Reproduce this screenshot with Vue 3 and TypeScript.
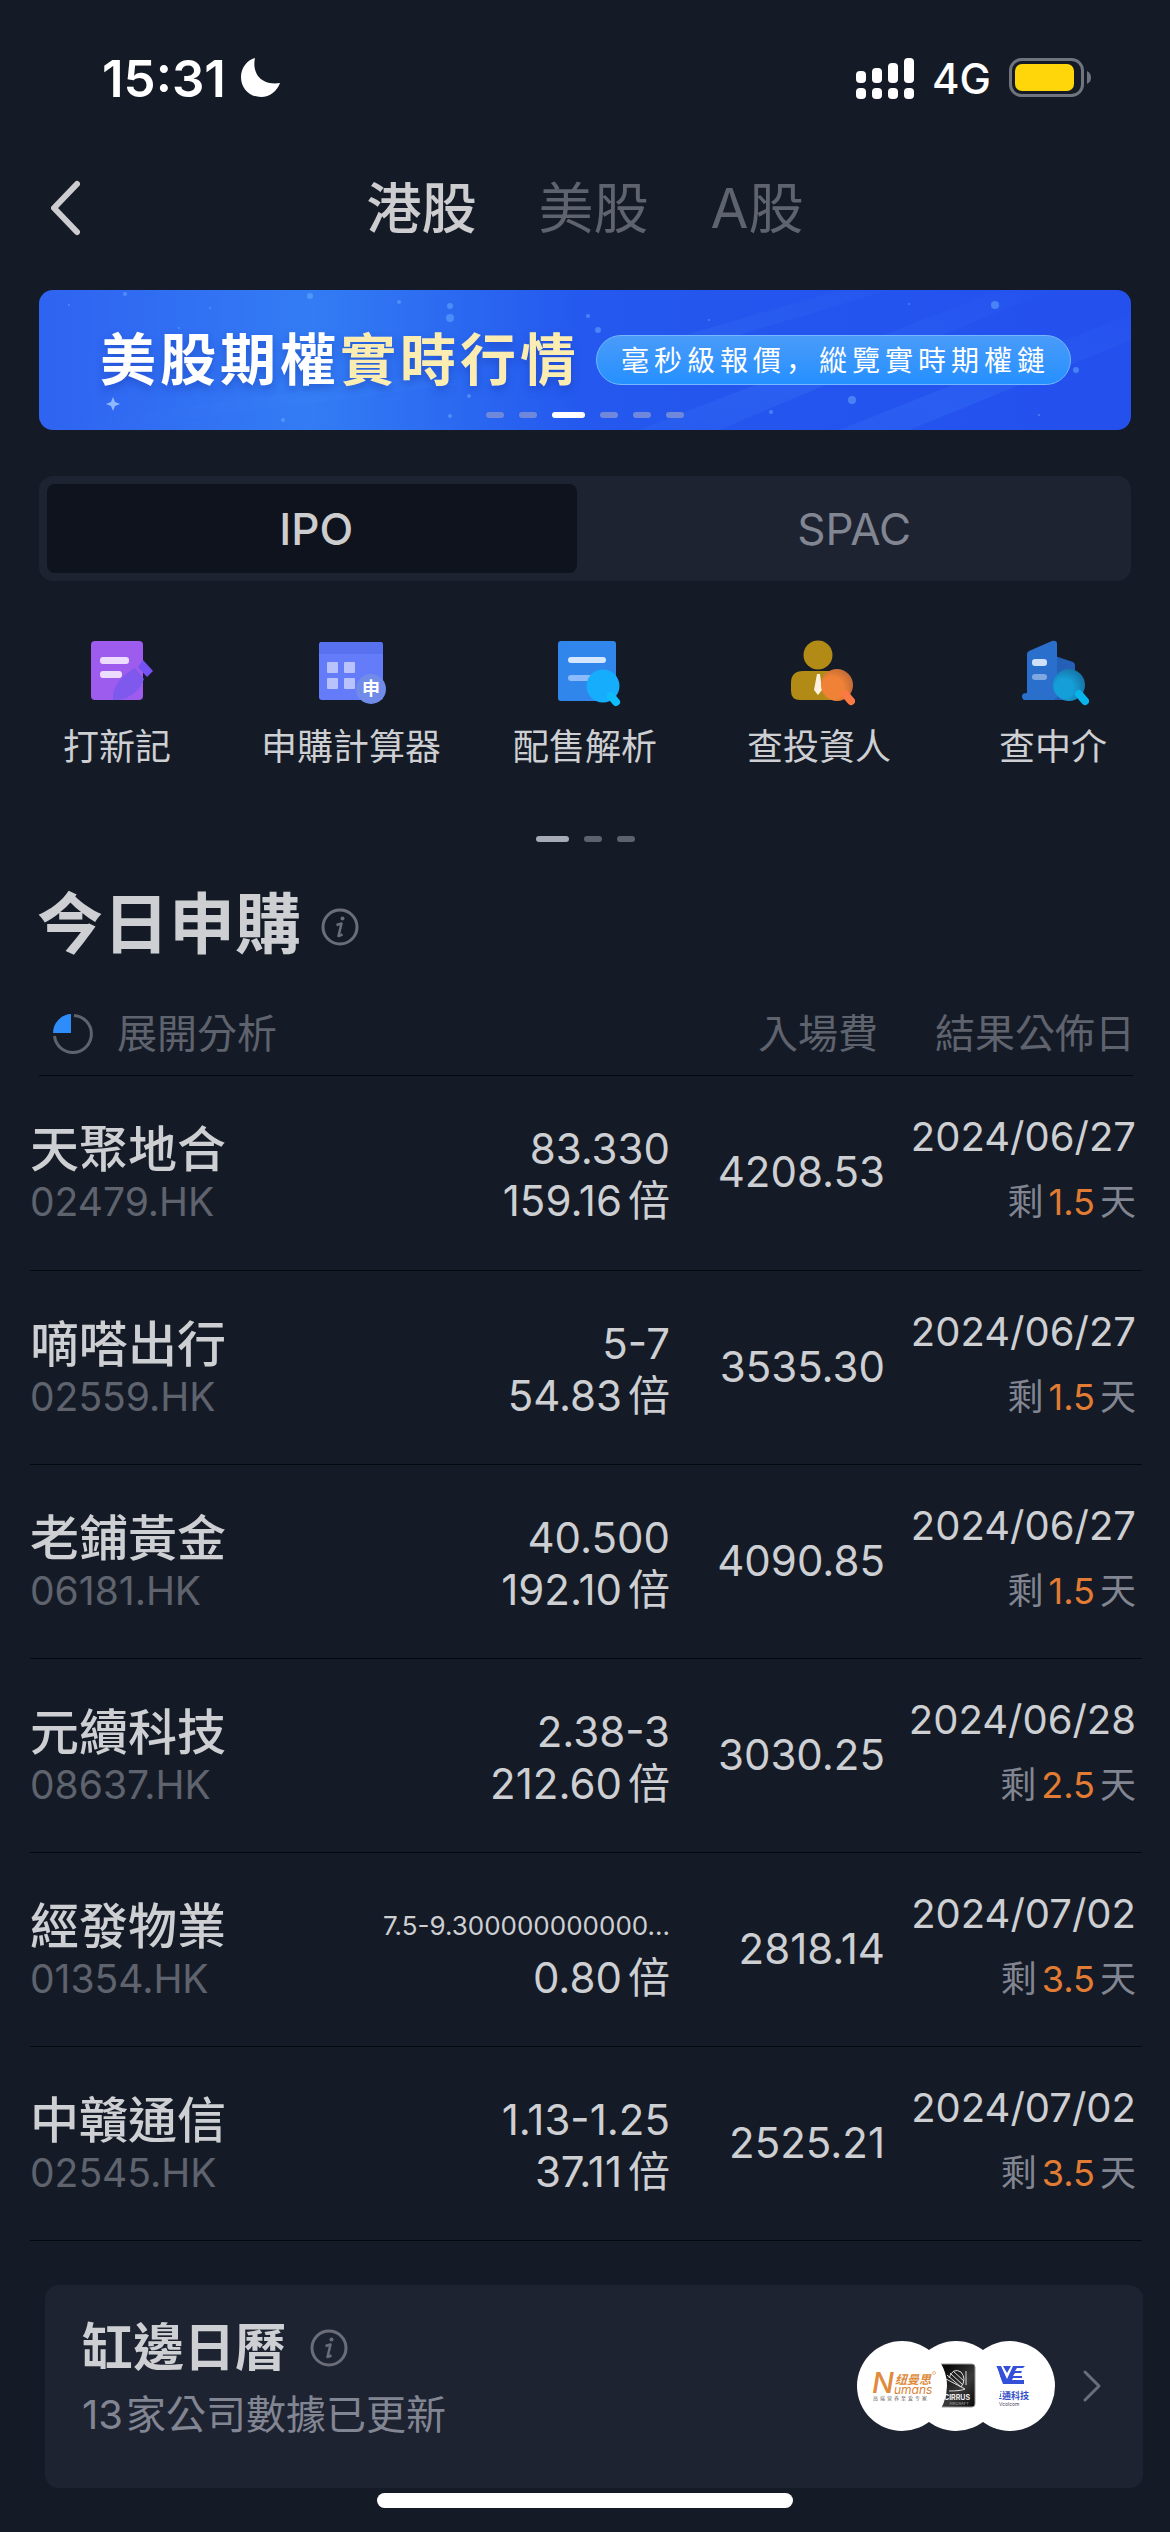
<script setup lang="ts">
interface Offering {
  name: string
  code: string
  price: string
  small?: boolean
  multiple: string
  fee: string
  date: string
  days: string
}

const markets: string[] = ['港股', '美股', 'A股']
const tools: string[] = ['打新記', '申購計算器', '配售解析', '查投資人', '查中介']

const offerings: Offering[] = [
  { name: '天聚地合', code: '02479.HK', price: '83.330', multiple: '159.16', fee: '4208.53', date: '2024/06/27', days: '1.5' },
  { name: '嘀嗒出行', code: '02559.HK', price: '5-7', multiple: '54.83', fee: '3535.30', date: '2024/06/27', days: '1.5' },
  { name: '老鋪黃金', code: '06181.HK', price: '40.500', multiple: '192.10', fee: '4090.85', date: '2024/06/27', days: '1.5' },
  { name: '元續科技', code: '08637.HK', price: '2.38-3', multiple: '212.60', fee: '3030.25', date: '2024/06/28', days: '2.5' },
  { name: '經發物業', code: '01354.HK', price: '7.5-9.300000000000...', small: true, multiple: '0.80', fee: '2818.14', date: '2024/07/02', days: '3.5' },
  { name: '中贛通信', code: '02545.HK', price: '1.13-1.25', multiple: '37.11', fee: '2525.21', date: '2024/07/02', days: '3.5' },
]
</script>

<template>
  <div class="app">
    <header class="status">
      <div class="clock">
        <span>15:31</span>
        <svg width="42" height="42" viewBox="0 0 42 42"><path d="M15 1C12 14 19 29 40 26C37 34 30 40 21 40C10 40 1 32 1 20C1 11 7 3 15 1Z" fill="#fff" /></svg>
      </div>
      <div class="signals">
        <svg width="58" height="42" viewBox="0 0 58 42" fill="#fff">
          <rect x="0" y="14" width="10" height="12" rx="4" /><rect x="16" y="11" width="10" height="15" rx="4" /><rect x="32" y="6" width="10" height="20" rx="4" /><rect x="48" y="1" width="10" height="25" rx="4" />
          <rect x="0" y="31" width="10" height="11" rx="4" /><rect x="16" y="31" width="10" height="11" rx="4" /><rect x="32" y="31" width="10" height="11" rx="4" /><rect x="48" y="31" width="10" height="11" rx="4" />
        </svg>
        <span class="network">4G</span>
        <svg width="84" height="40" viewBox="0 0 84 40">
          <rect x="1.5" y="1.5" width="72" height="36" rx="11" fill="none" stroke="#70747d" stroke-width="3" />
          <rect x="6" y="6" width="59" height="27" rx="7" fill="#ffd60a" />
          <path d="M78 13Q82 15 82 19.500Q82 24 78 26Z" fill="#70747d" />
        </svg>
      </div>
    </header>

    <nav class="nav">
      <button class="back" aria-label="返回">
        <svg width="34" height="56" viewBox="0 0 34 56"><path d="M29 4L6 28L29 52" fill="none" stroke="#cdcdcf" stroke-width="6" stroke-linecap="round" stroke-linejoin="round" /></svg>
      </button>
      <div class="markets">
        <button v-for="(m, i) in markets" :key="m" :class="['market', { on: i === 0 }]">{{ m }}</button>
      </div>
    </nav>

    <a class="banner" href="#">
      <svg class="sky" viewBox="0 0 1092 140" preserveAspectRatio="none" aria-hidden="true">
        <defs>
          <linearGradient id="sky" x1="0" y1="0" x2="1" y2="0">
            <stop offset="0" stop-color="#2f63f1" /><stop offset="0.25" stop-color="#337cf4" /><stop offset="0.5" stop-color="#2458ee" /><stop offset="1" stop-color="#2450ee" />
          </linearGradient>
          <linearGradient id="ray" x1="0" y1="1" x2="1" y2="0">
            <stop offset="0" stop-color="#4a95ff" stop-opacity="0" /><stop offset="0.5" stop-color="#4a95ff" stop-opacity="0.16" /><stop offset="1" stop-color="#4a95ff" stop-opacity="0" />
          </linearGradient>
        </defs>
        <rect width="1092" height="140" fill="url(#sky)" />
        <path d="M40 132L360 88L420 94L60 140Z M560 70L800 0H850L570 84Z M600 140L960 0H1010L680 140Z M800 140L1092 24V50L870 140Z" fill="url(#ray)" />
        <g fill="#6cb2ff" opacity="0.5">
          <circle cx="271" cy="6" r="3" /><circle cx="411" cy="16" r="3" /><circle cx="411" cy="28" r="4" /><circle cx="360" cy="12" r="2" /><circle cx="559" cy="40" r="3" /><circle cx="549" cy="26" r="2" /><circle cx="956" cy="15" r="4" /><circle cx="813" cy="110" r="4" /><circle cx="732" cy="122" r="2" /><circle cx="86" cy="4" r="2" /><circle cx="1037" cy="80" r="3" /><circle cx="244" cy="130" r="2" /><circle cx="411" cy="126" r="2" /><circle cx="30" cy="15" r="1" /><circle cx="430" cy="106" r="2" /><circle cx="870" cy="14" r="1" /><circle cx="1000" cy="125" r="1" /><circle cx="171" cy="18" r="1" /><circle cx="140" cy="38" r="1" /><circle cx="670" cy="30" r="1" />
        </g>
        <path d="M74 107L76 112L81 114L76 116L74 121L72 116L67 114L72 112Z" fill="#8fb8ff" />
      </svg>
      <span class="headline">美股期權<em>實時行情</em></span>
      <span class="pill">毫秒級報價<span class="comma">，</span>縱覽實時期權鏈</span>
      <span class="dots slide-dots"><i /><i /><i class="on" /><i /><i /><i /></span>
    </a>

    <div class="segment">
      <button class="seg on">IPO</button>
      <button class="seg">SPAC</button>
    </div>

    <div class="tools">
      <a v-for="(t, i) in tools" :key="t" class="tool" href="#">
        <svg v-if="i === 0" width="72" height="72" viewBox="0 0 72 72">
          <rect x="10" y="5" width="52" height="59" rx="4" fill="#9d5ced" />
          <rect x="19" y="21" width="29" height="7" rx="3" fill="#ecdcff" /><rect x="19" y="35" width="22" height="7" rx="3" fill="#ecdcff" />
          <path d="M32 64C31 52 38 41 54 32L63 43C60 53 50 62 38 64Z" fill="#7857ee" opacity="0.8" /><path d="M62 24L72 35L66 41L57 31Z" fill="#7552f4" />
        </svg>
        <svg v-else-if="i === 1" width="72" height="72" viewBox="0 0 72 72">
          <rect x="4" y="6" width="64" height="58" rx="3" fill="#647bfa" /><path d="M7 6H65Q68 6 68 9V18H4V9Q4 6 7 6Z" fill="#5872ef" />
          <g fill="#b8c2fc"><rect x="12" y="26" width="11" height="11" rx="1" /><rect x="29" y="26" width="11" height="11" rx="1" /><rect x="12" y="42" width="11" height="11" rx="1" /><rect x="29" y="42" width="11" height="11" rx="1" /></g>
          <circle cx="56" cy="53" r="15" fill="#718be9" /><text x="56" y="59" text-anchor="middle" font-size="18" font-weight="700" fill="#fff">申</text>
        </svg>
        <svg v-else-if="i === 2" width="72" height="72" viewBox="0 0 72 72">
          <rect x="9" y="5" width="58" height="60" rx="3" fill="#3086eb" />
          <rect x="19" y="21" width="38" height="6" rx="3" fill="#d5e7ff" /><rect x="19" y="39" width="28" height="6" rx="3" fill="#8dbafa" />
          <circle cx="54" cy="50" r="16.500" fill="#16adfc" /><path d="M62 60L67 66" stroke="#10bdfc" stroke-width="8" stroke-linecap="round" />
        </svg>
        <svg v-else-if="i === 3" width="72" height="72" viewBox="0 0 72 72">
          <defs><radialGradient id="lensWarm" cx="0.35" cy="0.6" r="0.7"><stop offset="0.5" stop-color="#ef8236" /><stop offset="1" stop-color="#bd6937" /></radialGradient></defs>
          <circle cx="35" cy="19" r="14.500" fill="#b18b15" /><path d="M20 35H52V64H17Q8 64 8 55V47Q8 35 20 35Z" fill="#b18b15" />
          <path d="M34 38H37L39 54L35 59L31 54Z" fill="#fff1df" />
          <circle cx="54" cy="49" r="16" fill="url(#lensWarm)" /><path d="M62 58L68 65" stroke="#fb7943" stroke-width="8" stroke-linecap="round" />
        </svg>
        <svg v-else width="72" height="72" viewBox="0 0 72 72">
          <defs><radialGradient id="lensCool" cx="0.35" cy="0.6" r="0.7"><stop offset="0.4" stop-color="#159fd8" /><stop offset="1" stop-color="#176fa1" /></radialGradient></defs>
          <path d="M38 20L56 26Q58 27 58 29V62H38Z" fill="#2560b8" /><path d="M10 18Q10 16 12 15L35 5Q40 4 40 8V64H8Q5 64 5 60Q5 57 10 57Z" fill="#2a6fcb" /><path d="M38 62H56V64H38Z" fill="#2560b8" />
          <rect x="15" y="23" width="15" height="7" rx="3" fill="#cfe0f8" /><rect x="15" y="38" width="15" height="6" rx="3" fill="#7fa8e0" />
          <circle cx="52" cy="49" r="16" fill="url(#lensCool)" /><path d="M62 58L68 65" stroke="#08b5ea" stroke-width="8" stroke-linecap="round" />
        </svg>
        <span>{{ t }}</span>
      </a>
    </div>
    <div class="dots tool-dots"><i class="on" /><i /><i /></div>

    <h1 class="title">
      今日申購
      <svg class="info" width="38" height="38" viewBox="0 0 38 38"><circle cx="19" cy="19" r="17" fill="none" stroke="#6b6e79" stroke-width="3" /><circle cx="21.500" cy="10.500" r="2" fill="#6b6e79" /><path d="M15.500 17L20.500 15.500L17.500 28L21.500 26.500" fill="none" stroke="#6b6e79" stroke-width="2.500" stroke-linejoin="round" /></svg>
    </h1>

    <table class="list">
      <colgroup><col class="c1" /><col class="c2" /><col class="c3" /><col /></colgroup>
      <thead>
        <tr>
          <th scope="col">
            <button class="expand">
              <svg width="42" height="42" viewBox="0 0 42 42"><path d="M22 2.500A18.500 18.500 0 1 1 2.500 23" fill="none" stroke="#5f636e" stroke-width="3" /><path d="M19 1V20H1A19 19 0 0 1 19 1Z" fill="#2f8dfb" /></svg>
              展開分析
            </button>
          </th>
          <th scope="col"></th>
          <th scope="col">入場費</th>
          <th scope="col">結果公佈日</th>
        </tr>
      </thead>
      <tbody>
        <tr v-for="o in offerings" :key="o.code">
          <td><div class="name">{{ o.name }}</div><div class="code">{{ o.code }}</div></td>
          <td><div :class="['num', { tiny: o.small }]">{{ o.price }}</div><div class="num times">{{ o.multiple }}<b>倍</b></div></td>
          <td><div class="num fee">{{ o.fee }}</div></td>
          <td><div class="date">{{ o.date }}</div><div class="left">剩<b>{{ o.days }}</b>天</div></td>
        </tr>
      </tbody>
    </table>

    <a class="card" href="#">
      <div class="card-text">
        <h2>
          缸邊日曆
          <svg class="info" width="38" height="38" viewBox="0 0 38 38"><circle cx="19" cy="19" r="17" fill="none" stroke="#6b6e79" stroke-width="3" /><circle cx="21.500" cy="10.500" r="2" fill="#6b6e79" /><path d="M15.500 17L20.500 15.500L17.500 28L21.500 26.500" fill="none" stroke="#6b6e79" stroke-width="2.500" stroke-linejoin="round" /></svg>
        </h2>
        <p><span>13</span>家公司數據已更新</p>
      </div>
      <div class="logos">
        <svg width="90" height="90" viewBox="0 0 90 90">
          <circle cx="45" cy="45" r="45" fill="#fff" />
          <text x="15" y="52" font-size="29" font-weight="500" font-style="italic" fill="#e08a3c">N</text>
          <text x="38" y="43" font-size="12" font-weight="700" font-style="italic" fill="#e08a3c">纽曼思</text>
          <text x="37" y="53" font-size="12" font-style="italic" fill="#d98234">umans</text>
          <circle cx="77" cy="32" r="1.500" fill="none" stroke="#e08a3c" stroke-width="0.600" />
          <text class="motto" x="16" y="59" font-size="5" fill="#666">高端营养至爱专家</text>
        </svg>
        <svg width="90" height="90" viewBox="0 0 90 90">
          <defs><linearGradient id="metal" x1="0" y1="0" x2="1" y2="1"><stop offset="0.200" stop-color="#090909" /><stop offset="0.600" stop-color="#3a3a3a" /><stop offset="1" stop-color="#070707" /></linearGradient></defs>
          <circle cx="45" cy="45" r="45" fill="#fff" />
          <rect x="24" y="23" width="40" height="43" rx="3" fill="url(#metal)" stroke="#999" />
          <path d="M38 37Q42 26 50 31Q56 38 50 46L36 34M39 32L52 44M42 30L53 40M38 50Q50 50 54 48L35 38M55 30V44" fill="none" stroke="#ddd" stroke-width="1" />
          <text x="46" y="59" text-anchor="middle" font-size="7" font-weight="700" fill="#eee">CIRRUS</text>
          <text x="48" y="64" text-anchor="middle" font-size="4" fill="#aaa">AIRCRAFT</text>
        </svg>
        <svg width="90" height="90" viewBox="0 0 90 90">
          <circle cx="45" cy="45" r="45" fill="#fff" />
          <path d="M31 25H36L42 38L48 25H60L58 27H52L50 30H57L56 32H50L48 35H57V37H48L47 39H59V43H38Z M38 25H46L42 32Z" fill="#3450d8" />
          <text x="28" y="58" font-size="9" font-weight="700" fill="#3450c8">卓通科技</text>
          <text x="34" y="65" font-size="5" fill="#445">Vcolcom</text>
        </svg>
      </div>
      <svg class="go" width="20" height="34" viewBox="0 0 20 34"><path d="M3 3L17 17L3 31" fill="none" stroke="#6b6e79" stroke-width="3" stroke-linecap="round" stroke-linejoin="round" /></svg>
    </a>
    <div class="home" />
  </div>
</template>

<style>
body { background: #151b26; }
</style>

<style scoped>
* { box-sizing: border-box; }
.app {
  background: #151b26;
  color: #cdcfd3;
  font-family: Inter, "Noto Sans CJK TC", sans-serif;
  font-weight: 400;
  min-height: 100vh;
  display: flex;
  flex-direction: column;
}
button { font: inherit; color: inherit; background: none; border: 0; padding: 0; cursor: pointer; }
a { color: inherit; text-decoration: none; }
svg { display: block; flex: none; }
svg text { font-family: Inter, "Noto Sans CJK TC", sans-serif; }

.status { height: 156px; display: flex; justify-content: space-between; align-items: center; padding: 0 77px 0 102px; color: #fff; }
.clock { display: flex; align-items: center; gap: 14px; font-size: 51px; font-weight: 600; }
.signals { display: flex; align-items: center; gap: 18px; }
.network { font-size: 42px; font-weight: 500; }

.nav { height: 104px; display: flex; align-items: center; justify-content: center; position: relative; }
.back { position: absolute; left: 48px; }
.markets { display: flex; gap: 62px; }
.market { font-size: 55px; line-height: 78px; color: #5f636e; }
.market.on { color: #cdcdcf; font-weight: 500; }

.banner { position: relative; margin: 30px 39px 0; height: 140px; border-radius: 14px; overflow: hidden; display: flex; align-items: center; padding-left: 61px; gap: 16px; color: #fff; }
.sky { position: absolute; inset: 0; width: 100%; height: 100%; }
.headline { position: relative; font-size: 56px; font-weight: 700; letter-spacing: 4px; line-height: 70px; text-shadow: 0 4px 8px rgba(20, 50, 160, 0.4); white-space: nowrap; }
.headline em { font-style: normal; color: #fbedb2; }
.pill { position: relative; height: 50px; line-height: 46px; padding: 0 20px 0 24px; border: 1px solid #74b6ff; border-radius: 25px; background: linear-gradient(#4a9bf9, #2590ff); font-size: 28px; letter-spacing: 5px; white-space: nowrap; }
.comma { font-family: "Noto Sans CJK SC", sans-serif; }
.dots { display: flex; justify-content: center; gap: 15px; }
.dots i { width: 18px; height: 6px; border-radius: 3px; background: #5d626e; }
.dots i.on { width: 33px; background: #a7abb6; }
.slide-dots { position: absolute; left: 0; right: 0; bottom: 12px; }
.slide-dots i { background: #6f88dc; }
.slide-dots i.on { background: #fff; }

.segment { margin: 46px 39px 0; height: 105px; padding: 8px; border-radius: 14px; background: #1e2332; display: flex; }
.seg { flex: 1; padding-left: 8px; font-size: 44px; color: #828692; border-radius: 8px; }
.seg.on { flex: 0 0 49.300%; background: #0f131d; color: #cdcdcf; font-weight: 500; }

.tools { display: flex; margin-top: 55px; }
.tool { flex: 1; display: flex; flex-direction: column; align-items: center; gap: 13px; font-size: 36px; line-height: 52px; }
.tool-dots { margin-top: 63px; }

.title { margin: 42px 37px 0; display: flex; align-items: center; gap: 20px; font-size: 66px; line-height: 80px; font-weight: 700; }
.title .info { margin-top: 6px; }

.list { margin: 27px 28px 0 30px; border-collapse: collapse; table-layout: fixed; width: calc(100% - 58px); }
.c1 { width: 310px; } .c2 { width: 330px; } .c3 { width: 215px; }
.list th { height: 85px; padding: 0 7px 0 0; font-size: 40px; line-height: 56px; font-weight: 400; color: #5f636e; text-align: right; white-space: nowrap; }
.list th:first-child { text-align: left; padding-left: 22px; }
.list thead tr { background: linear-gradient(#05080e, #05080e) center bottom / calc(100% - 18px) 1px no-repeat; }
.expand { display: flex; align-items: center; gap: 23px; }
.list td { height: 194px; padding: 0; vertical-align: top; text-align: right; white-space: nowrap; }
.list td:first-child { text-align: left; }
.list tbody tr { border-bottom: 1px solid #05080e; }
.name { margin-top: 46px; font-size: 49px; line-height: 56px; font-weight: 500; }
.code { font-size: 39px; line-height: 48px; color: #5f636e; }
.num { font-size: 42px; line-height: 52px; }
td:nth-child(2) .num:first-child { margin-top: 47px; }
.num.tiny { font-size: 26px; }
.times b { font-weight: 400; margin-left: 6px; }
.fee { margin-top: 70px; }
.date { margin-top: 35px; padding-right: 6px; font-size: 40px; line-height: 52px; }
.left { padding-right: 6px; margin-top: 13px; font-size: 36px; line-height: 52px; color: #828692; }
.left b { margin: 0 5px; font-weight: 400; color: #e27b33; }

.card { margin: 44px 27px 0 45px; height: 203px; border-radius: 14px; background: #1e2332; padding: 0 41px 0 37px; display: flex; align-items: center; }
.card-text { flex: 1; padding-bottom: 12px; }
.card h2 { margin: 0; font-size: 51px; line-height: 70px; font-weight: 700; display: flex; align-items: center; gap: 24px; }
.card p { margin: 0; font-size: 40px; line-height: 64px; color: #828692; }
.card p span { margin-right: 3px; }
.logos { display: flex; }
.logos svg { position: relative; margin-left: -36px; }
.logos svg:nth-child(1) { z-index: 3; }
.logos svg:nth-child(2) { z-index: 2; }
.logos svg:nth-child(3) { z-index: 1; }
.motto { letter-spacing: 2px; }
.go { margin-left: 27px; }
.home { width: 416px; height: 15px; border-radius: 8px; background: #fff; margin: 5px auto 20px; }
</style>
